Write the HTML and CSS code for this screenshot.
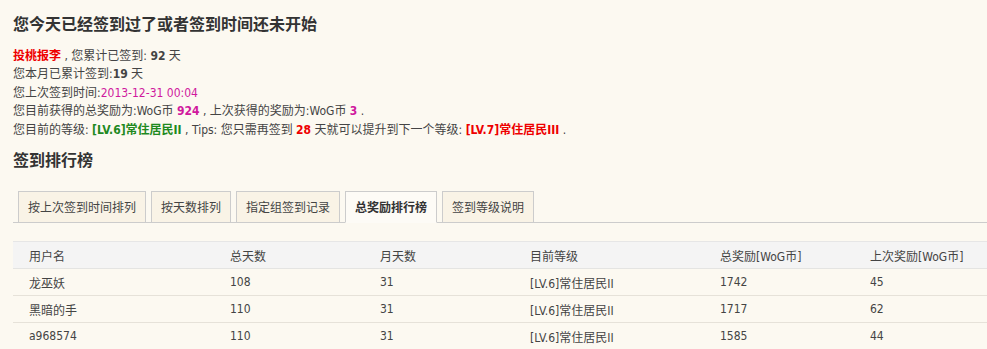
FILE: index.html
```html
<!DOCTYPE html>
<html lang="zh-CN">
<head>
  <meta charset="UTF-8" />
  <title>签到</title>
  <link rel="stylesheet" href="styles.css">
</head>
<body>
  <div class="container">
    <h2 class="title">您今天已经签到过了或者签到时间还未开始</h2>

    <div class="info">
      <p><span class="red b">投桃报李</span> , 您累计已签到: <b>92</b> 天</p>
      <p>您本月已累计签到:<b>19</b> 天</p>
      <p>您上次签到时间:<span class="pink">2013-12-31 00:04</span></p>
      <p>您目前获得的总奖励为:WoG币 <b class="pink">924</b> , 上次获得的奖励为:WoG币 <b class="pink">3</b> .</p>
      <p>您目前的等级: <b class="green">[LV.6]常住居民II</b> , Tips: 您只需再签到 <b class="red">28</b> 天就可以提升到下一个等级: <b class="red">[LV.7]常住居民III</b> .</p>
    </div>

    <h2 class="title sub">签到排行榜</h2>

    <ul class="tabs">
      <li>按上次签到时间排列</li>
      <li>按天数排列</li>
      <li>指定组签到记录</li>
      <li class="active">总奖励排行榜</li>
      <li>签到等级说明</li>
    </ul>

    <table class="rank">
      <tr class="head">
        <td class="c1">用户名</td>
        <td class="c2">总天数</td>
        <td class="c3">月天数</td>
        <td class="c4">目前等级</td>
        <td class="c5">总奖励[WoG币]</td>
        <td>上次奖励[WoG币]</td>
      </tr>
      <tr>
        <td>龙巫妖</td>
        <td>108</td>
        <td>31</td>
        <td>[LV.6]常住居民II</td>
        <td>1742</td>
        <td>45</td>
      </tr>
      <tr>
        <td>黑暗的手</td>
        <td>110</td>
        <td>31</td>
        <td>[LV.6]常住居民II</td>
        <td>1717</td>
        <td>62</td>
      </tr>
      <tr>
        <td>a968574</td>
        <td>110</td>
        <td>31</td>
        <td>[LV.6]常住居民II</td>
        <td>1585</td>
        <td>44</td>
      </tr>
    </table>
  </div>
</body>
</html>
```

FILE: styles.css
```css
body {
  margin: 0;
  background-color: #fcf9f1;
  font-family: "DejaVu Sans Condensed", "Noto Sans CJK SC", sans-serif;
  font-size: 12px;
  color: #444;
}
.container {
  padding: 11px 0 0 13px;
}
.title {
  margin: 0;
  font-family: "Noto Sans CJK SC", sans-serif;
  font-size: 16px;
  line-height: 24px;
  font-weight: bold;
  color: #333;
}
.title.sub {
  margin-top: 8px;
}
.info {
  margin-top: 12px;
}
.info p {
  margin: 0;
  line-height: 18.4px;
}
.red { color: #e00; }
.pink { color: #d0199e; }
.green { color: #1f8a1f; }
.b { font-weight: bold; }

.tabs {
  display: flex;
  list-style: none;
  margin: 20px 0 0;
  padding: 0 0 0 5px;
  border-bottom: 1px solid #ccc;
}
.tabs li {
  height: 30px;
  line-height: 30px;
  padding: 0 9px;
  margin-right: 5px;
  margin-bottom: -1px;
  border: 1px solid #ccc;
  background-color: #f9f3e6;
  color: #444;
  font-family: "Noto Sans CJK SC", sans-serif;
}
.tabs li.active {
  background-color: #fdfbf6;
  border-bottom-color: #fdfbf6;
  font-weight: bold;
  color: #333;
}

.rank {
  width: 100%;
  margin-top: 18px;
  border-collapse: collapse;
}
.rank td {
  height: 26px;
  padding: 0 0 0 16px;
  border-bottom: 1px solid #e6e2d9;
  text-align: left;
}
.rank .head td {
  background-color: #f4f4f4;
  border-top: 1px solid #e6e6e6;
  border-bottom-color: #e4e4e2;
}
.c1 { width: 185px; }
.c2 { width: 134px; }
.c3 { width: 134px; }
.c4 { width: 174px; }
.c5 { width: 134px; }
```
